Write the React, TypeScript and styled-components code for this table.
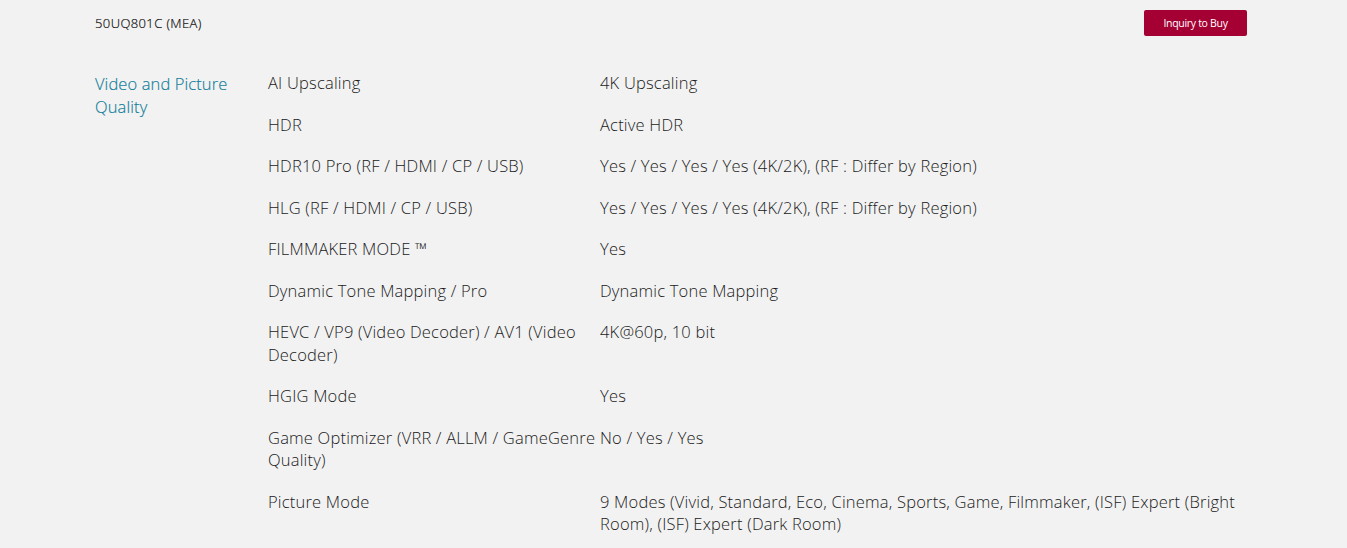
import React from 'react';
import { createGlobalStyle, styled } from 'styled-components';

const GlobalStyle = createGlobalStyle`
  html, body {
    margin: 0;
    padding: 0;
    background: #f2f2f2;
  }
  body {
    font-family: 'Open Sans', 'Noto Sans', sans-serif;
    color: #333;
  }
`;

const Page = styled.div`
  width: 1157px;
  margin-left: 95px;
`;

const TopBar = styled.div`
  display: flex;
  justify-content: space-between;
  align-items: center;
  height: 46px;
  padding-right: 5px;
`;

const ModelName = styled.div`
  font-size: 13px;
  font-weight: 300;
  color: #111;
  letter-spacing: 0.4px;
  -webkit-text-stroke: 0.2px #111;
`;

const BuyButton = styled.button`
  width: 103px;
  height: 26px;
  background: #a50034;
  color: #fff;
  border: none;
  border-radius: 2px;
  font-family: 'Open Sans', sans-serif;
  font-size: 10.5px;
  font-weight: 400;
  letter-spacing: -0.3px;
  cursor: pointer;
`;

const Section = styled.div`
  display: grid;
  grid-template-columns: 173px 1fr;
  padding-top: 26px;
`;

const Category = styled.div`
  color: #137d9a;
  font-size: 16.5px;
  line-height: 23px;
  font-weight: 300;
  letter-spacing: 0.1px;
  -webkit-text-stroke: 0.15px #137d9a;
`;

const SpecList = styled.div`
  display: flex;
  flex-direction: column;
  gap: 19px;
`;

const SpecRow = styled.div`
  display: grid;
  grid-template-columns: 332px 1fr;
  font-size: 16.5px;
  line-height: 22.5px;
  font-weight: 300;
  letter-spacing: 0.2px;
  color: #1a1a1a;
`;

const SpecName = styled.div`
  padding-right: 4px;
`;

const SpecValue = styled.div`
  padding-right: 0;
`;

const specs: [string, string][] = [
  ['AI Upscaling', '4K Upscaling'],
  ['HDR', 'Active HDR'],
  ['HDR10 Pro (RF / HDMI / CP / USB)', 'Yes / Yes / Yes / Yes (4K/2K), (RF : Differ by Region)'],
  ['HLG (RF / HDMI / CP / USB)', 'Yes / Yes / Yes / Yes (4K/2K), (RF : Differ by Region)'],
  ['FILMMAKER MODE ™', 'Yes'],
  ['Dynamic Tone Mapping / Pro', 'Dynamic Tone Mapping'],
  ['HEVC / VP9 (Video Decoder) / AV1 (Video Decoder)', '4K@60p, 10 bit'],
  ['HGIG Mode', 'Yes'],
  ['Game Optimizer (VRR / ALLM / GameGenre Quality)', 'No / Yes / Yes'],
  [
    'Picture Mode',
    '9 Modes (Vivid, Standard, Eco, Cinema, Sports, Game, Filmmaker, (ISF) Expert (Bright Room), (ISF) Expert (Dark Room)',
  ],
];

export default function App() {
  return (
    <>
      <GlobalStyle />
      <Page>
        <TopBar>
          <ModelName>50UQ801C (MEA)</ModelName>
          <BuyButton type="button">Inquiry to Buy</BuyButton>
        </TopBar>
        <Section>
          <Category>
            Video and Picture
            <br />
            Quality
          </Category>
          <SpecList>
            {specs.map(([name, value]) => (
              <SpecRow key={name}>
                <SpecName>{name}</SpecName>
                <SpecValue>{value}</SpecValue>
              </SpecRow>
            ))}
          </SpecList>
        </Section>
      </Page>
    </>
  );
}
